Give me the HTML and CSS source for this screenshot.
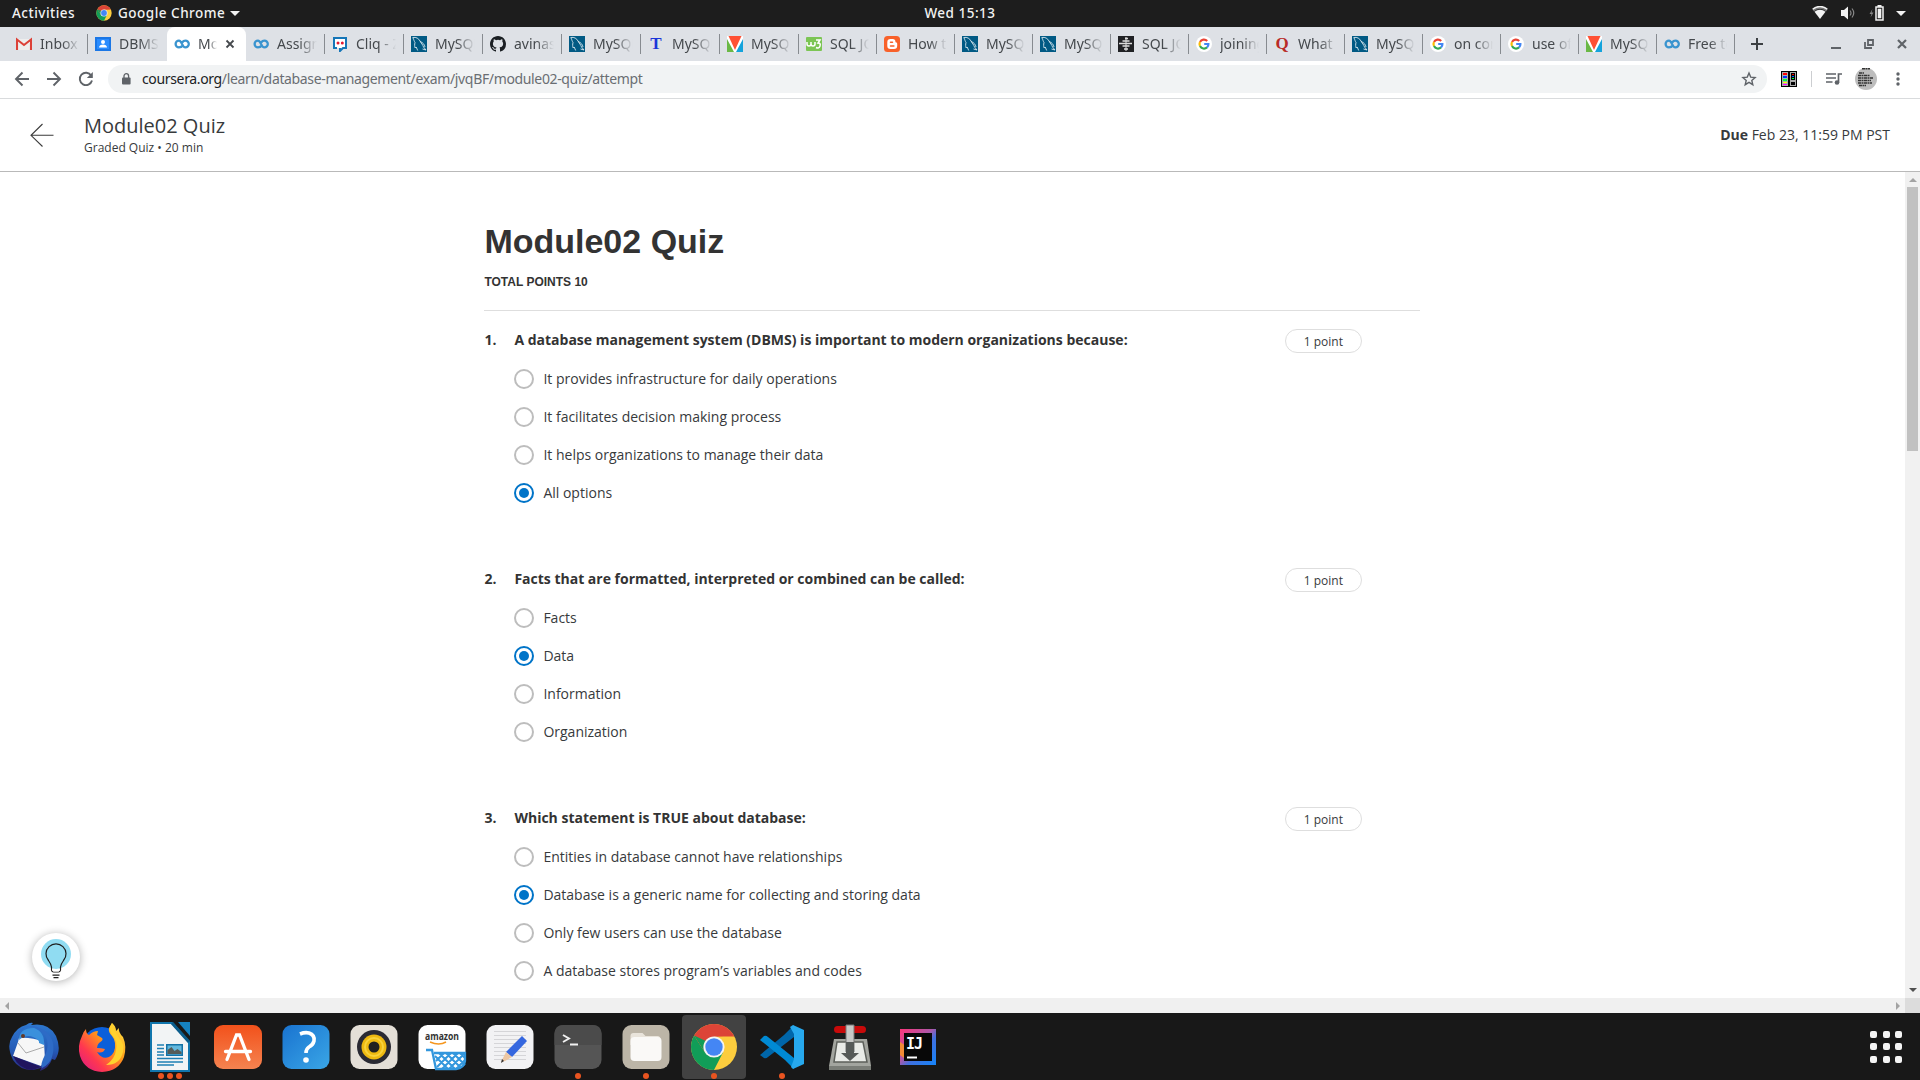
FILE: index.html
```html
<!DOCTYPE html>
<html lang="en">
<head>
<meta charset="utf-8">
<title>Module02 Quiz</title>
<link rel="stylesheet" href="styles.css">
</head>
<body>
<svg class="defs" width="0" height="0">
  <defs>
    <symbol id="chrome" viewBox="0 0 48 48">
      <circle cx="24" cy="24" r="23" fill="#fccd3e"/>
      <path d="M24 24 4.100 12.500A23 23 0 0 1 43.900 12.500L24 13.500Z" fill="#dc4437"/>
      <path d="M4.100 12.500A23 23 0 0 0 24 47L33.100 29.300 14.900 29.300Z" fill="#119d58"/>
      <path d="M4.100 12.500 14.900 29.300 24 24 24 13.500 44.400 13.500 43.900 12.500 24 8Z" fill="#dc4437"/>
      <path d="M4.100 12.500 14.900 29.300 18 19Z" fill="#119d58"/>
      <circle cx="24" cy="24" r="10.600" fill="#f4f4f4"/>
      <circle cx="24" cy="24" r="8.700" fill="#4486f4"/>
    </symbol>
    <symbol id="coursera" viewBox="0 0 16 16">
      <path d="M8.600 9.700C7.800 11 6.500 11.400 5 11.400A3.400 3.400 0 0 1 5 4.600C8.200 4.600 7.800 11.400 11.400 11.400A3.400 3.400 0 1 0 11.400 4.600C10 4.600 9 5.200 8.300 6.400" fill="none" stroke="#3a94cf" stroke-width="2.300"/>
    </symbol>
    <symbol id="mysql" viewBox="0 0 16 16">
      <path d="M0 0h16v16H0z" fill="#015a84"/>
      <path d="M1.500 1.500c4-.7 6 1 7.500 3.500 1 2 3 4 3.500 6l2.500 3-3.500-1M2 2c1 2 1 3 2 4.500-.5 2-.5 4 .2 5.500l1-1 1.500 3.500M9 5.500c3 1 4.500 3 5 5.500" fill="none" stroke="#d7e6ee" stroke-width=".9"/>
    </symbol>
    <symbol id="google" viewBox="0 0 16 16">
      <circle cx="8" cy="8" r="8" fill="#fff"/>
      <g fill="none" stroke-width="2.200"><path d="M11.200 4.900A4.500 4.500 0 0 0 4 6" stroke="#ea4335"/><path d="M4 6a4.500 4.500 0 0 0 0 4.100" stroke="#fbbc05"/><path d="M4 10.100a4.500 4.500 0 0 0 7 1.300" stroke="#34a853"/><path d="M11 11.400A4.300 4.300 0 0 0 12.400 8H8.200" stroke="#4285f4"/></g>
    </symbol>
    <symbol id="vtab" viewBox="0 0 16 16"><path d="M0 0h16v16H0z" fill="#fff"/><path d="M0 3 7 16H0z" fill="#6ab845"/><path d="M16 3 9 16h7z" fill="#14a3dc"/><path d="M1.500 0h13L8 14z" fill="#ff5034"/></symbol>
  </defs>
</svg>

<header class="topbar">
  <span class="activities">Activities</span>
  <span class="appmenu"><svg width="16" height="16"><use href="#chrome"/></svg><span class="appname">Google Chrome</span><i class="caret"></i></span>
  <span class="clock">Wed 15:13</span>
  <span class="status">
    <svg width="16" height="14" viewBox="0 0 16 14"><path d="M.5 3.500A11 11 0 0 1 15.500 3.500L14 5.400A9 9 0 0 0 2 5.400Z" fill="#777"/><path d="M2.500 5.800A8.500 8.500 0 0 1 13.500 5.800L8 13Z" fill="#f2f2f2"/><path d="M.7 3.300A11 11 0 0 1 15.300 3.300" fill="none" stroke="#f2f2f2" stroke-width="1.500"/></svg>
    <svg width="16" height="14" viewBox="0 0 16 14"><path d="M1 4h3l4-3.500v13L4 10H1z" fill="#f2f2f2"/><path d="M10 4.500q2 2.500 0 5M12 2.500q3.500 4.500 0 9" fill="none" stroke="#888" stroke-width="1.200"/></svg>
    <svg width="16" height="16" viewBox="0 0 16 16"><path d="M4.500 4 1.500 9h2L2.500 12.500 5.500 7.500h-2z" fill="#888"/><path d="M8 2h7v13H8z" fill="none" stroke="#f2f2f2" stroke-width="1.500"/><path d="M9.700 3.700h3.600v9.600H9.700zM9.500 0h4v2h-4z" fill="#f2f2f2"/></svg>
    <i class="caret"></i>
  </span>
</header>

<nav class="tabs">
  <div class="tab"><svg viewBox="0 0 16 16"><path d="M2 3h12v11H2z" fill="#eee"/><path d="M1 14V3.500L8 9l7-5.500V14" fill="none" stroke="#dc4138" stroke-width="2.100"/></svg><span>Inbox (1)</span></div>
  <div class="tab plain"><svg viewBox="0 0 16 16"><path d="M0 1h16v14H0z" fill="#1b77e6"/><path d="M2 3h12v10H2z" fill="#2a8cff"/><circle cx="8" cy="6" r="2" fill="#fff"/><path d="M4 11.500c0-4 8-4 8 0z" fill="#fff"/></svg><span>DBMS</span></div>
  <div class="tab active"><svg><use href="#coursera"/></svg><span>Module</span><svg class="close" viewBox="0 0 10 10"><path d="m1.500 1.500 7 7m0-7-7 7" stroke="#45494d" stroke-width="1.800"/></svg></div>
  <div class="tab"><svg><use href="#coursera"/></svg><span>Assign</span></div>
  <div class="tab"><svg viewBox="0 0 16 16"><path d="M5 12H2V2h12v10h-3l-3 3v-3" fill="#fff" stroke="#1676b8" stroke-width="2"/><circle cx="6" cy="7" r="1.500" fill="#e31b32"/><circle cx="10.300" cy="7" r="1.500" fill="#e31b32"/></svg><span>Cliq - Z</span></div>
  <div class="tab"><svg><use href="#mysql"/></svg><span>MySQL</span></div>
  <div class="tab"><svg viewBox="0 0 16 16"><path fill="#1b1f23" d="M8 0C3.580 0 0 3.580 0 8c0 3.540 2.290 6.530 5.470 7.590.4.070.55-.17.55-.38 0-.19-.01-.82-.01-1.490-2.010.37-2.530-.49-2.690-.94-.09-.23-.48-.94-.82-1.130-.28-.15-.68-.52-.01-.53.63-.01 1.080.58 1.230.82.72 1.210 1.870.87 2.330.66.07-.52.28-.87.51-1.070-1.780-.2-3.640-.89-3.640-3.950 0-.87.31-1.590.82-2.150-.08-.2-.36-1.020.08-2.120 0 0 .67-.21 2.200.82a7.400 7.400 0 0 1 4 0c1.530-1.040 2.200-.82 2.200-.82.44 1.100.16 1.920.08 2.120.51.56.82 1.270.82 2.150 0 3.070-1.870 3.750-3.650 3.950.29.25.54.73.54 1.480 0 1.070-.01 1.930-.01 2.200 0 .21.15.46.55.38A8 8 0 0 0 16 8c0-4.420-3.580-8-8-8z"/></svg><span>avinas</span></div>
  <div class="tab"><svg><use href="#mysql"/></svg><span>MySQL</span></div>
  <div class="tab"><b class="letter blue">T</b><span>MySQL</span></div>
  <div class="tab"><svg><use href="#vtab"/></svg><span>MySQL</span></div>
  <div class="tab n"><svg viewBox="0 0 16 16"><rect y="1" width="16" height="14" rx="1" fill="#7cc554"/><path d="M1 6v2q0 2 2 2t2-2V6v2q0 2 2 2t2-2V6M10 4h4l-2 3q3 0 2 3t-4 1.500" fill="none" stroke="#fff" stroke-width="1.500"/></svg><span>SQL JO</span></div>
  <div class="tab n"><svg viewBox="0 0 16 16"><rect width="16" height="16" rx="3.500" fill="#f8612a"/><path d="M6.500 3h2.300a2.600 2.600 0 0 1 2.600 2.600q0 1 .8 1 1 0 1 1.200v2A3.200 3.200 0 0 1 10 13H6.500a3.200 3.200 0 0 1-3.200-3.200V6.200A3.200 3.200 0 0 1 6.500 3z" fill="#fff"/><path d="M6.500 6.200h2M6.500 9.900h3.400" stroke="#f8612a" stroke-width="1.500" stroke-linecap="round"/></svg><span>How to</span></div>
  <div class="tab n"><svg><use href="#mysql"/></svg><span>MySQL</span></div>
  <div class="tab n"><svg><use href="#mysql"/></svg><span>MySQL</span></div>
  <div class="tab n"><svg viewBox="0 0 16 16"><path d="M0 0h16v16H0z" fill="#202124"/><path d="M7 2.500h3M4.500 5h7M1 7.500h13M4.500 10h7M6 13h4" stroke="#ddd" stroke-width="1.300"/><path d="M8 1v14" stroke="#ddd"/></svg><span>SQL JO</span></div>
  <div class="tab n"><svg><use href="#google"/></svg><span>joining</span></div>
  <div class="tab n"><b class="letter red">Q</b><span>What i</span></div>
  <div class="tab n"><svg><use href="#mysql"/></svg><span>MySQL</span></div>
  <div class="tab n"><svg><use href="#google"/></svg><span>on con</span></div>
  <div class="tab n"><svg><use href="#google"/></svg><span>use of</span></div>
  <div class="tab n"><svg><use href="#vtab"/></svg><span>MySQL</span></div>
  <div class="tab n"><svg><use href="#coursera"/></svg><span>Free te</span></div>
  <svg class="newtab" viewBox="0 0 12 12"><path d="M6 0v12M0 6h12" stroke="#3c4043" stroke-width="2"/></svg>
  <div class="winbtns">
    <svg width="10" height="12" viewBox="0 0 10 12"><path d="M0 10h10" stroke="#5f6368" stroke-width="2"/></svg>
    <svg width="10" height="12" viewBox="0 0 10 12"><path d="M4 2h5v5H4z" fill="none" stroke="#5f6368" stroke-width="1.800"/><path d="M1 4v6h7" fill="none" stroke="#5f6368" stroke-width="1.800"/></svg>
    <svg width="10" height="10" viewBox="0 0 10 10"><path d="m1 1 8 8m0-8L1 9" stroke="#5f6368" stroke-width="2.200"/></svg>
  </div>
</nav>

<div class="toolbar">
  <div class="navbtns">
    <svg width="16" height="16" viewBox="0 0 16 16"><path d="M15 8H2M8.500 1.500 2 8l6.500 6.500"/></svg>
    <svg width="16" height="16" viewBox="0 0 16 16"><path d="M1 8h13M7.500 1.500 14 8l-6.500 6.500"/></svg>
    <svg width="16" height="16" viewBox="0 0 16 16"><path d="M13.200 4.500A6.200 6.200 0 1 0 14 9.500"/><path d="M14.800 1v6H8.800z" class="solid"/></svg>
  </div>
  <div class="omnibox">
    <svg width="9" height="12" viewBox="0 0 9 12"><rect y="4.500" width="8.600" height="7" rx="1" fill="#5f6368"/><path d="M2 5V3a2.300 2.300 0 0 1 4.600 0v2" fill="none" stroke="#5f6368" stroke-width="1.300"/></svg>
    <span class="url"><b>coursera.org</b>/learn/database-management/exam/jvqBF/module02-quiz/attempt</span>
    <svg class="star" width="16" height="16" viewBox="0 0 16 16"><path d="m8 2 1.700 4.100 4.400.4-3.300 2.900 1 4.300L8 11.400l-3.800 2.300 1-4.300L1.900 6.500l4.400-.4z" fill="none" stroke="#5f6368" stroke-width="1.400"/></svg>
  </div>
  <svg class="ext" width="16" height="16" viewBox="0 0 16 16"><path d="M0 0h16v16H0z"/><path d="M1 1h6v14H1zM9 1h6v14H9z" fill="#aaa"/><path d="M2 2h4v2H2z" fill="red"/><path d="M2 5h4v2H2z" fill="#03f"/><path d="M2 8h4v2H2z" fill="#0f4"/><path d="M2 11h4v1H2z" fill="#ff0"/><path d="M2 13h4v1H2z" fill="#f0f"/><path d="M10 2h4v7h-4zM10 11h4v3h-4z"/><path d="M11 3h2v1h-2z" fill="red"/><path d="M11 5h2v1h-2z" fill="#06f"/><path d="M11 7h2v1h-2z" fill="#0f4"/></svg>
  <i class="divider"></i>
  <svg class="playlist" width="16" height="12" viewBox="0 0 16 12"><path d="M0 1h10M0 5h10M0 9h6.500M12.500 9.500V1H16" fill="none" stroke="#5f6368" stroke-width="1.700"/><circle cx="11" cy="9.500" r="2.300" fill="#5f6368"/></svg>
  <svg class="avatar" width="22" height="22" viewBox="0 0 22 22"><circle cx="11" cy="11" r="11" fill="#bdbdbd"/><path d="M7 .8h8M4 5h5M3 7.500h12M3 10h15M3 12.500h13M3 15h14M4 17.500h7" stroke="#333" stroke-width="1.400" stroke-dasharray="3 .5 2 .5"/></svg>
  <svg class="menu" width="4" height="14" viewBox="0 0 4 14"><g fill="#5f6368"><circle cx="2" cy="2" r="1.700"/><circle cx="2" cy="7" r="1.700"/><circle cx="2" cy="12" r="1.700"/></g></svg>
</div>

<div class="quizbar">
  <svg width="24" height="24" viewBox="0 0 24 24"><path d="M23.500 12.300H1M12.500 1 1 12.300 12.500 23.500" fill="none" stroke="#3b3b3b" stroke-width="1.100"/></svg>
  <div class="heading"><div class="title">Module02 Quiz</div><div class="sub">Graded Quiz • 20 min</div></div>
  <div class="due"><b>Due</b> Feb 23, 11:59 PM PST</div>
</div>

<div class="viewport">
  <main class="page">
    <div class="quiz">
      <h1>Module02 Quiz</h1>
      <div class="total">TOTAL POINTS 10</div>
      <section class="question">
        <div class="num">1.</div>
        <div class="body"><h2>A database management system (DBMS) is important to modern organizations because:</h2>
          <label><i></i><span>It provides infrastructure for daily operations</span></label>
          <label><i></i><span>It facilitates decision making process</span></label>
          <label><i></i><span>It helps organizations to manage their data</span></label>
          <label><i class="on"></i><span>All options</span></label></div>
        <div class="points">1 point</div>
      </section>
      <section class="question">
        <div class="num">2.</div>
        <div class="body"><h2>Facts that are formatted, interpreted or combined can be called:</h2>
          <label><i></i><span>Facts</span></label>
          <label><i class="on"></i><span>Data</span></label>
          <label><i></i><span>Information</span></label>
          <label><i></i><span>Organization</span></label></div>
        <div class="points">1 point</div>
      </section>
      <section class="question">
        <div class="num">3.</div>
        <div class="body"><h2>Which statement is TRUE about database:</h2>
          <label><i></i><span>Entities in database cannot have relationships</span></label>
          <label><i class="on"></i><span>Database is a generic name for collecting and storing data</span></label>
          <label><i></i><span>Only few users can use the database</span></label>
          <label><i></i><span>A database stores program’s variables and codes</span></label></div>
        <div class="points">1 point</div>
      </section>
    </div>
    <div class="hint"><svg width="32" height="42" viewBox="0 0 32 42"><circle cx="16" cy="16" r="15" fill="#90dcf2"/><path d="M11.500 32v-3q-.5-3-3-6.500A10 10 0 1 1 23.500 22.500Q21 26 20.500 29v3Q20 34 18.500 34h-5Q12 34 11.500 32z" fill="none" stroke="#1f1f1f" stroke-width="1.200"/><path d="M12.100 31h7.800v1q-.5 1.400-1.400 1.400h-5q-.9 0-1.400-1.400z" fill="#fff"/><path d="M12.500 37.200h7M13.500 39.700h5" stroke="#1f1f1f" stroke-width="1.200"/></svg></div>
  </main>
  <div class="vscroll"><i class="up"></i><div class="thumb"></div><i class="down"></i></div>
  <div class="hscroll"><i class="left"></i><i class="right"></i></div>
  <div class="corner"></div>
</div>

<footer class="dock">
  <div class="app"><svg viewBox="0 0 50 50"><defs><linearGradient id="tb" x2="0" y2="1"><stop stop-color="#2e79d0"/><stop offset=".6" stop-color="#2458b4"/><stop offset="1" stop-color="#2a2478"/></linearGradient></defs><path d="M17 3Q21 0 24 1L22 3Q40 0 47 14q6 14-1 24l-3-1q-3 9-12 12l1-3-8 2Q10 48 4 38-3 24 3 15 8 5 17 3z" fill="url(#tb)"/><path d="M10 16Q22 15 35 20L36 38 32 44 4 34 9 20z" fill="#f7f7f7"/><path d="m9 21 8 10 18-6" fill="none" stroke="#aaa"/><path d="M8 19Q10 8 18 4 26 4 34 11 42 20 36 33 31 42 33 46 41 42 43 35q5-17-7-26Q24 1 14 6 6 11 8 19z" fill="#2e6bc6"/><path d="M10 18Q17 12 24 15t6 6l5 2Q36 10 25 6 10 6 10 18z" fill="#3a90dc"/><circle cx="14" cy="14" r="2" fill="#633a28"/><path d="m4 34 28 11-9 3Q10 47 4 34z" fill="#20145e"/></svg></div>
  <div class="app"><svg viewBox="0 0 50 50"><defs><linearGradient id="ff" x1="1" y1="0" x2="0" y2="1"><stop stop-color="#fff14a"/><stop offset=".4" stop-color="#ff9a18"/><stop offset=".7" stop-color="#ff3750"/><stop offset="1" stop-color="#d8178c"/></linearGradient></defs><circle cx="25" cy="25" r="20" fill="#0b5fda"/><path d="M9 7Q9 12 12 13 16 9 21 9l-1 4 5 3q2 2-3 5-2 2-2 5 4 0 8 1-2 5-8 3Q25 38 32 35q7-4 6-14-1-5-3-7-4-4-3-8L35 1q4 3 4 8l3-3q-1 4 4 9 4 9 1 20-5 14-22 15Q8 49 3 34 0 24 5 14q1-4 4-7z" fill="url(#ff)"/><path d="M35 1q-4 6 0 12 6 6 4 15-1 9-10 15 14 0 17-13 2-8-4-14-4-6-7-15z" fill="#ffd22e"/></svg></div>
  <div class="app"><svg viewBox="0 0 50 50"><path d="M6 1h21l17 19v29H6z" fill="#f2f4f5" stroke="#1176ad" stroke-width="2"/><path d="M33 0h12v14z" fill="#1682c0"/><path d="M27 1 44 20" stroke="#0b5d8c" stroke-width="3"/><path d="M12 23h7M12 26.500h7M12 30h7M12 33h7M12 36.500h26M12 40h26M12 43h17" stroke="#1f80b4" stroke-width="1.500"/><path d="M21 22h17v12H21z" fill="#1472a6"/><path d="M22.500 23.500h14v9h-14z" fill="#63b8dd"/><path d="M22.500 32v-4l4-3 3 4 3-2 4 3v2z" fill="#555c58"/></svg><span class="dots"><i></i><i></i><i></i></span></div>
  <div class="app"><svg viewBox="0 0 50 50"><defs><linearGradient id="sw" x2="0" y2="1"><stop stop-color="#f2511b"/><stop offset="1" stop-color="#f58350"/></linearGradient></defs><rect x="1" y="3" width="48" height="44" rx="9" fill="url(#sw)"/><path d="M14 37.500 23.500 13h3L36 37.500M12.500 29.500h25" fill="none" stroke="#fff" stroke-width="3.300" stroke-linecap="round"/></svg></div>
  <div class="app"><svg viewBox="0 0 50 50"><defs><linearGradient id="hp" x2="1" y2="1"><stop stop-color="#1973d0"/><stop offset="1" stop-color="#3aa6e6"/></linearGradient></defs><rect x="1.500" y="3" width="47" height="44" rx="9" fill="url(#hp)"/><path d="M19 12q5-2 9-1 6 2 5 8-1 4-5 6-3 2-3 6" fill="none" stroke="#fff" stroke-width="3.600"/><circle cx="25" cy="38" r="2.800" fill="#fff"/></svg></div>
  <div class="app"><svg viewBox="0 0 50 50"><rect x="1.500" y="3" width="47" height="44" rx="9" fill="#e4dfd7"/><circle cx="25" cy="25" r="17" fill="#2a2a33"/><circle cx="25" cy="25" r="12.500" fill="#eeb911"/><circle cx="25" cy="25" r="9" fill="none" stroke="#f8d23c" stroke-width="2"/><circle cx="25" cy="25" r="5.500" fill="#202020"/></svg></div>
  <div class="app"><svg viewBox="0 0 50 50"><rect x="1.500" y="3" width="47" height="44" rx="9" fill="#fff"/><text x="8" y="18" font-family="Open Sans, sans-serif" font-weight="700" font-size="10" textLength="34" lengthAdjust="spacingAndGlyphs" fill="#333">amazon</text><path d="M13 20q9 4 16 0" fill="none" stroke="#f5961e" stroke-width="1.500"/><path d="M9 28h6l4 19h20q8-1 9-8v-8H17" fill="none" stroke="#3397dd" stroke-width="2.300"/><path d="m18 34 13 13M22 31l16 16M29 31l15 15M36 31l12 12M43 31l5 5M27 31l-8 8M34 31 20 45M41 31 25 47M48 31 32 47M48 38l-9 9" stroke="#3397dd" stroke-width="2"/></svg></div>
  <div class="app"><svg viewBox="0 0 50 50"><rect x="1.500" y="3" width="47" height="44" rx="9" fill="#f2f2f4"/><path d="M9 9.500h32M9 13.500h32M9 17.500h32M9 21.500h32M9 25.500h32M9 29.500h32M9 33.500h32M9 37.500h32" stroke="#d5d5d8"/><path d="m37 14 5 5-15 16-6-5z" fill="#3567df"/><path d="m21 30 6 5-7 4-4 1z" fill="#edc7a3"/><path d="m17 37 2 2-3 2z" fill="#333"/></svg></div>
  <div class="app"><svg viewBox="0 0 50 50"><rect x="1.500" y="3" width="47" height="44" rx="9" fill="#555"/><path d="M1.500 23V12q0-9 9-9h29q9 0 9 9v11z" fill="#4b4b4b"/><path d="m10 13 6 3.500L10 20M17 22.500h8" fill="none" stroke="#f1f1f1" stroke-width="1.900"/></svg><span class="dots"><i></i></span></div>
  <div class="app"><svg viewBox="0 0 50 50"><rect x="1.500" y="3" width="47" height="44" rx="9" fill="#bcb5a7"/><path d="M9.500 14q0-3 3-3h9l3 3h12q3 0 3 4v5h-30z" fill="#e9e4db"/><rect x="9.500" y="15" width="31" height="24" rx="4" fill="#faf9f7"/></svg><span class="dots"><i></i></span></div>
  <div class="app current"><svg viewBox="0 0 50 50"><use href="#chrome" x="1" y="1" width="48" height="48"/></svg><span class="dots"><i></i></span></div>
  <div class="app"><svg viewBox="0 0 50 50"><path d="m37 3-10 10L3 33l4 3q2 1 4-1L37 15z" fill="#0066a9"/><path d="m37 47-9-9L3 18l4-4q2-1 4 1L37 36z" fill="#008ad4"/><path d="m36 3 11 5v34l-11 5-2-2 3-8V12L33 5z" fill="#27a9ee"/></svg><span class="dots"><i></i></span></div>
  <div class="app"><svg viewBox="0 0 50 50"><path d="M9 17h33l4 27v4H4v-4z" fill="#a3a59f"/><path d="M12 20h26l4 20H9z" fill="#e9ebe7" stroke="#5d605b" stroke-width="1.500"/><path d="M4 44h42v4H4z" fill="#7a7d77"/><rect x="9" y="4" width="32" height="7" rx="3.500" fill="#c80a0a"/><path d="M21 3h8v27h-8z" fill="#c7c8c6" stroke="#777"/><path d="M21 20h8v11h5l-9 8-9-8h5z" fill="#565a58"/></svg></div>
  <div class="app"><svg viewBox="0 0 50 50"><defs><linearGradient id="ij" x2="1" y2="1"><stop stop-color="#fb377c"/><stop offset=".45" stop-color="#ad58a8"/><stop offset=".6" stop-color="#4070df"/><stop offset="1" stop-color="#1485fa"/></linearGradient></defs><path d="M7 7h36v36H7z" fill="url(#ij)"/><path d="M7 20 16 26 11 36 7 33z" fill="#f28a36"/><path d="M11 11h28v28H11z" fill="#080808"/><text x="13" y="26.500" font-family="DejaVu Sans Mono, monospace" font-weight="700" font-size="15" textLength="17" fill="#fff">IJ</text><path d="M14 35.500h10" stroke="#fff" stroke-width="2"/></svg></div>
  <div class="grid"><i></i><i></i><i></i><i></i><i></i><i></i><i></i><i></i><i></i></div>
</footer>
</body>
</html>
```
FILE: styles.css
```css
* { box-sizing: border-box; }
body { margin: 0; width: 1920px; height: 1080px; overflow: hidden; display: flex; flex-direction: column; background: #fff; color: #373a3c; font-family: "Open Sans", sans-serif; font-size: 14px; }
svg { display: block; flex: none; }
.defs { position: absolute; }

.topbar { height: 27px; padding-bottom: 1px; flex: none; background: #1d1d1d; color: #f2f2f2; display: grid; grid-template-columns: 96px 1fr auto 1fr; align-items: center; font-family: "Noto Sans", sans-serif; font-weight: 500; font-size: 13.5px; letter-spacing: .5px; line-height: 26px; }
.activities { padding-left: 12px; }
.appmenu { display: flex; align-items: center; }
.appname { margin: 0 5px 0 6px; }
.caret { border: 5px solid transparent; border-top-color: #f2f2f2; border-bottom: 0; }
.clock { margin-right: 96px; }
.status { display: flex; justify-content: flex-end; align-items: center; gap: 12px; padding-right: 14px; }

.tabs { height: 34px; flex: none; display: flex; align-items: center; background: #dee1e6; padding-left: 9px; font-family: "Noto Sans", sans-serif; font-size: 14px; color: #45494d; }
.tab { width: 79px; height: 20px; padding: 0 7px; display: flex; align-items: center; gap: 8px; border-right: 1px solid #878b90; flex: none; }
.tab.n { width: 78px; }
.tab.plain { border-color: transparent; }
.tab > svg { width: 16px; height: 16px; }
.tab span { flex: 1; min-width: 0; padding-bottom: 2px; white-space: nowrap; overflow: hidden; -webkit-mask-image: linear-gradient(90deg, #000 55%, transparent); mask-image: linear-gradient(90deg, #000 55%, transparent); }
.tab.active { height: 34px; background: #fff; border: 0; border-radius: 8px 8px 0 0; }
.tab.active .close { width: 10px; height: 10px; margin-right: 4px; }
.letter { width: 16px; text-align: center; font: 700 17px/20px "Liberation Serif", serif; }
.blue { color: #1c35d8; }
.red { color: #b92b27; }
.newtab { width: 12px; height: 12px; margin-left: 16px; }
.winbtns { margin-left: auto; padding-right: 13px; display: flex; align-items: center; gap: 23px; }

.toolbar { height: 38px; flex: none; display: flex; align-items: center; border-bottom: 1px solid #d9dbdd; padding: 0 20px 1px 14px; }
.navbtns { display: flex; gap: 16px; width: 94px; }
.navbtns path { fill: none; stroke: #5f6368; stroke-width: 1.9; }
.navbtns .solid { fill: #5f6368; stroke: none; }
.omnibox { width: 1659px; height: 28px; border-radius: 14px; background: #f1f3f4; display: flex; align-items: center; padding: 0 10px 0 14px; }
.url { margin-left: 11px; flex: 1; padding-bottom: 1px; font-family: "Noto Sans", sans-serif; font-size: 14px; letter-spacing: -.35px; color: #6a6e73; }
.url b { font-weight: 400; color: #202124; }
.ext { margin-left: 14px; }
.divider { width: 1px; height: 16px; background: #ccced1; margin: 0 14px; }
.avatar { margin-left: 13px; }
.menu { margin-left: auto; }

.quizbar { height: 73px; flex: none; display: flex; align-items: center; padding: 0 30px; border-bottom: 1px solid #b9b9b9; }
.heading { margin-left: 30px; }
.title { font-size: 20px; line-height: 26px; }
.sub { font-size: 12px; line-height: 18px; }
.due { margin-left: auto; padding-bottom: 2px; }

.viewport { flex: 1; min-height: 0; display: grid; grid-template-columns: 1905px 15px; grid-template-rows: 826px 15px; }
.page { position: relative; overflow: hidden; }
.quiz { width: 936px; margin-left: 484.4px; padding-top: 47px; }
h1 { margin: 0; font: 700 34px/44px "Liberation Sans", sans-serif; color: #333; }
.total { height: 48px; padding-top: 10px; font: 700 12px/18px "Liberation Sans", sans-serif; color: #333; border-bottom: 1px solid #dedede; margin-bottom: 18px; }
.question { display: flex; height: 239px; }
.num { width: 30px; font-weight: 700; line-height: 22px; color: #333; }
.body { width: 770.5px; }
h2 { margin: 0 0 9px; font-size: 14px; line-height: 22px; font-weight: 700; color: #333; }
label { display: flex; align-items: center; height: 38px; gap: 9px; }
label i { width: 20px; height: 20px; border: 2px solid #bdbdbd; border-radius: 50%; padding: 3px; background: #fff content-box; }
label i.on { border-color: #0074c8; background-color: #0074c8; }
label span { padding-bottom: 2px; }
.points { width: 77px; height: 24px; border: 1px solid #dedede; border-radius: 12px; font-size: 12px; line-height: 23px; text-align: center; }
.hint { position: absolute; left: 32px; top: 761px; width: 48px; height: 48px; border-radius: 50%; background: #fff; box-shadow: 0 1px 8px rgba(0,0,0,.3); padding: 5px 8px; }

.vscroll { background: #f1f1f1; display: flex; flex-direction: column; align-items: center; }
.vscroll .up { margin: 6px 0 5px; border: 4px solid transparent; border-top: 0; border-bottom-color: #a3a3a3; }
.thumb { width: 11px; height: 264px; background: #c1c1c1; }
.vscroll .down { margin-top: auto; margin-bottom: 6px; border: 4px solid transparent; border-bottom: 0; border-top-color: #505050; }
.hscroll { background: #f0f0f0; display: flex; justify-content: space-between; align-items: center; padding: 0 5px; }
.hscroll i { border: 4px solid transparent; }
.hscroll .left { border-left: 0; border-right-color: #a3a3a3; }
.hscroll .right { border-right: 0; border-left-color: #a3a3a3; }
.corner { background: #dcdcdc; }

.dock { height: 67px; flex: none; background: #181818; display: flex; align-items: center; }
.app { position: relative; width: 64px; height: 64px; margin: 1px 2px 0; padding: 7px; border-radius: 4px; flex: none; }
.app svg { width: 50px; height: 50px; }
.current { background: #424242; }
.dots { position: absolute; left: 0; right: 0; bottom: 0; display: flex; justify-content: center; gap: 3px; }
.dots i { width: 6px; height: 6px; border-radius: 50%; background: #e95420; }
.grid { margin-left: auto; margin-right: 18px; display: grid; grid-template-columns: repeat(3, 7px); gap: 5.5px; }
.grid i { height: 7px; border-radius: 2px; background: #f5f5f5; }
```
